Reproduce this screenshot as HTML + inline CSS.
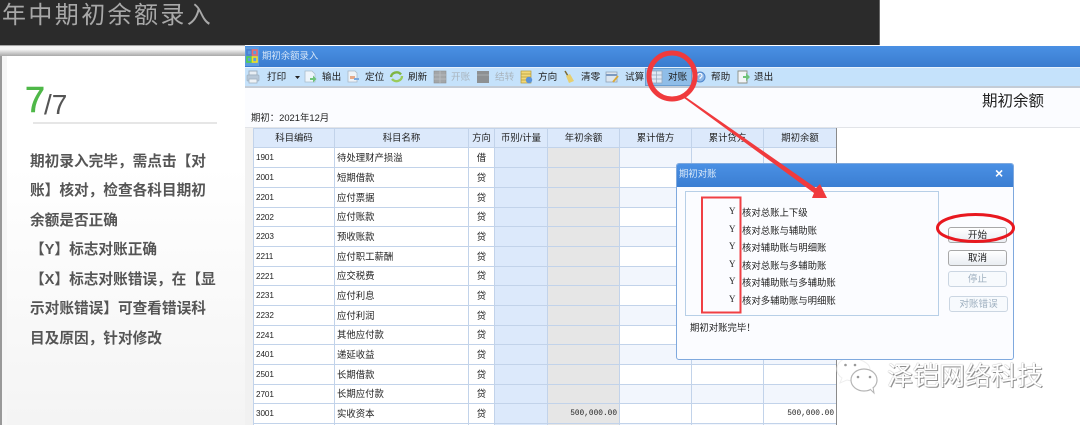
<!DOCTYPE html>
<html lang="zh">
<head>
<meta charset="utf-8">
<title>年中期初余额录入</title>
<style>
html,body{margin:0;padding:0;background:#fff}
#p{position:relative;width:1080px;height:425px;overflow:hidden;background:#fff;font-family:"Liberation Sans","Noto Sans CJK SC",sans-serif}
.t{position:absolute;white-space:nowrap;line-height:1}
.a{position:absolute}
.s{font-size:9.4px;color:#222}
.g{color:#a9b4bd}
.b{position:absolute;box-sizing:border-box;background:linear-gradient(#fff,#e9edf2);border:1px solid #a8a8a8;border-radius:3px;font-size:9.6px;color:#222;text-align:center}
.d{border-color:#cbd6e2;color:#9fb0c0;background:#f7fafd}
.l{position:absolute;left:30px;font-size:14.67px;font-weight:700;color:#555;line-height:1;white-space:nowrap}
table{position:absolute;left:253px;top:128px;border-collapse:collapse;table-layout:fixed;width:584px;font-size:9.4px;color:#222}
td,th{border:1px solid #c2d3ea;padding:0;overflow:hidden;white-space:nowrap;line-height:1;background:#fff}
th{background:#dce9fb;font-weight:400;text-align:center}
td.c{font-size:8.2px;letter-spacing:-.1px;padding:2px 0 0 2px;box-sizing:border-box}
td.n{padding-left:2px}
td.m{text-align:center}
td.u{background:#dce9fb}
td.e{background:#e6e6e6}
td.x{background:#f2f6fd}
td.v{font-family:"Liberation Mono",monospace;font-size:7.8px;text-align:right;padding:2px 2px 0 0;box-sizing:border-box}
</style>
</head>
<body>
<div id="p">
<!-- top band -->
<div class="a" style="left:0;top:0;width:880px;height:45px;background:#2b2b2b;border-right:1px solid #666;box-sizing:border-box"></div>
<div class="t" style="left:2px;top:4px;font-size:24px;letter-spacing:2.4px;color:#a8a8a8">年中期初余额录入</div>

<!-- left panel -->
<div class="a" style="left:0;top:45px;width:245px;height:11px;background:linear-gradient(#777 0,#f4f4f4 12%,#f4f4f4 40%,#a8a8a8 100%)"></div>
<div class="a" style="left:0;top:56px;width:245px;height:369px;background:linear-gradient(#fff,#fff 30%,#f4f4f4);"></div>
<div class="a" style="left:0;top:56px;width:2px;height:369px;background:#999"></div>
<div class="a" style="left:2px;top:56px;width:5px;height:369px;background:#f6f6f6"></div>
<div class="t" style="left:25px;top:82px;font-size:36px;color:#4fb848;-webkit-text-stroke:.6px #4fb848">7</div>
<div class="t" style="left:44px;top:91px;font-size:28px;color:#555">/7</div>
<div class="a" style="left:33px;top:122px;width:184px;height:2px;background:#e6e6e6"></div>
<div class="l" style="top:155px">期初录入完毕，需点击【对</div>
<div class="l" style="top:184px">账】核对，检查各科目期初</div>
<div class="l" style="top:214px">余额是否正确</div>
<div class="l" style="top:243px">【Y】标志对账正确</div>
<div class="l" style="top:273px">【X】标志对账错误，在【显</div>
<div class="l" style="top:302px">示对账错误】可查看错误科</div>
<div class="l" style="top:332px">目及原因，针对修改</div>

<!-- app window -->
<div class="a" style="left:245px;top:46px;width:835px;height:21px;background:linear-gradient(#4a90e4,#3a7ccf)"></div>
<div class="a" style="left:245px;top:67px;width:835px;height:1px;background:#e8f2fc"></div>
<div class="a" style="left:245px;top:68px;width:835px;height:18px;background:#c5e2fb"></div>
<div class="a" style="left:245px;top:86px;width:835px;height:2px;background:#c4ccd6"></div>
<div class="a" style="left:245px;top:88px;width:835px;height:39px;background:#fbfcff"></div>
<div class="a" style="left:245px;top:127px;width:835px;height:1px;background:#e2e4e8"></div>
<div class="a" style="left:245px;top:128px;width:8px;height:297px;background:#f1f1f1"></div>

<svg class="a" style="left:245px;top:47px" width="14" height="19" viewBox="0 0 14 19">
<rect x="0" y="0" width="14" height="19" fill="#5b9be0"/>
<rect x="2" y="3" width="4.500" height="5" fill="none" stroke="#4a7fd0" stroke-width="1.600"/>
<rect x="7.500" y="3" width="4.500" height="5" fill="none" stroke="#ef6a6a" stroke-width="1.600"/>
<rect x="2" y="10" width="4.500" height="5" fill="none" stroke="#52d24a" stroke-width="1.600"/>
<rect x="7.500" y="10" width="4.500" height="5" fill="none" stroke="#f2e01e" stroke-width="1.600"/>
</svg>
<div class="t" style="left:262px;top:51px;font-size:9.4px;color:#d5e5f7">期初余额录入</div>

<!-- toolbar -->
<div class="a" style="left:645px;top:68px;width:47px;height:18px;background:#8fbde8;border:1px solid #6a9fd2;box-sizing:border-box"></div>
<svg class="a" style="left:245px;top:68px" width="530" height="18" viewBox="245 68 530 18">
<!-- print -->
<rect x="249" y="71" width="8" height="4" fill="#e8eef4" stroke="#9fb0c0"/>
<rect x="247" y="75" width="12" height="6" rx="1" fill="#b8c8d8" stroke="#9fb0c0" stroke-width=".7"/>
<rect x="249" y="79" width="8" height="4" fill="#eef2f6" stroke="#9fb0c0" stroke-width=".8"/>
<!-- export -->
<path d="M305 71h7l3 3v8h-10z" fill="#eef5fb" stroke="#a8bccc" stroke-width=".8"/>
<path d="M310 78h3v-2.500l3.500 3.500-3.500 3.500v-2.500h-3z" fill="#6fc47a"/>
<!-- locate -->
<path d="M348 71h7l2 2v9h-9z" fill="#eef3f8" stroke="#a9b8c6" stroke-width=".8"/>
<rect x="350" y="76" width="5" height="3" fill="#e5a98a"/>
<rect x="354" y="78" width="5" height="2" fill="#7ba8de"/>
<!-- refresh -->
<path d="M391 77a5.500 5 0 0 1 10-2.500" fill="none" stroke="#7fb544" stroke-width="2.400"/>
<path d="M402 76a5.500 5 0 0 1-10 3" fill="none" stroke="#9acb5b" stroke-width="2.400"/>
<!-- open -->
<rect x="434" y="71" width="12" height="12" fill="#a3a6a8" stroke="#8e9092" stroke-width=".6"/>
<path d="M440 71v12M434 75h12M434 79h12" stroke="#bcbfc1" stroke-width=".8"/>
<!-- carry -->
<rect x="477" y="71" width="12" height="12" fill="#8d9092"/>
<path d="M477 75h12" stroke="#a8abad"/>
<!-- direction -->
<rect x="521" y="71" width="10" height="12" fill="#f2d878" stroke="#b49a3a" stroke-width=".7"/>
<path d="M521 74h10M521 77h10M521 80h10" stroke="#b49a3a" stroke-width=".7"/>
<circle cx="529" cy="80" r="3.200" fill="#5b93d8"/>
<!-- clear -->
<path d="M565 71l3 5" stroke="#7b6a35" stroke-width="1.500"/>
<path d="M566 76l4-2 4 7-5 2z" fill="#e7cf6f"/>
<!-- trial -->
<rect x="606" y="72" width="11" height="10" fill="#dde6ef" stroke="#8fa3b8" stroke-width=".8"/>
<path d="M606 75h11" stroke="#7d9ac0" stroke-width="2"/>
<path d="M613 82l5-6" stroke="#d9a93a" stroke-width="1.800"/>
<!-- check -->
<rect x="651" y="71" width="11" height="12" fill="#dfe9f5" stroke="#93a7bd" stroke-width=".8"/>
<path d="M656.500 71v12M651 75h11M651 79h11" stroke="#93a7bd" stroke-width=".7"/>
<!-- help -->
<circle cx="700" cy="77" r="5" fill="#8fb7e6" stroke="#4e86cc"/>
<path d="M698 75.500a2 2 0 1 1 3 1.700l-1 .8v1" fill="none" stroke="#fff" stroke-width="1"/>
<!-- exit -->
<path d="M738 71h9v12h-9z" fill="#f2f5f8" stroke="#8a8f84" stroke-width=".9"/>
<path d="M743 76h3v-3l4 4-4 4v-3h-3z" fill="#6fc47a"/>
<path d="M295 76h5l-2.500 3z" fill="#222"/>
</svg>
<div class="t s" style="left:267px;top:73px;font-size:9.6px">打印</div>
<div class="t s" style="left:322px;top:73px;font-size:9.6px">输出</div>
<div class="t s" style="left:365px;top:73px;font-size:9.6px">定位</div>
<div class="t s" style="left:408px;top:73px;font-size:9.6px">刷新</div>
<div class="t s g" style="left:451px;top:73px;font-size:9.6px">开账</div>
<div class="t s g" style="left:495px;top:73px;font-size:9.6px">结转</div>
<div class="t s" style="left:538px;top:73px;font-size:9.6px">方向</div>
<div class="t s" style="left:581px;top:73px;font-size:9.6px">清零</div>
<div class="t s" style="left:625px;top:73px;font-size:9.6px">试算</div>
<div class="t s" style="left:668px;top:73px;font-size:9.6px">对账</div>
<div class="t s" style="left:711px;top:73px;font-size:9.6px">帮助</div>
<div class="t s" style="left:754px;top:73px;font-size:9.6px">退出</div>

<div class="t s" style="left:251px;top:113px;font-size:9.4px">期初：2021年12月</div>
<div class="t" style="left:982px;top:94px;font-size:15.5px;color:#222">期初余额</div>

<!-- grid -->
<table>
<colgroup><col style="width:81px"><col style="width:134px"><col style="width:26px"><col style="width:53px"><col style="width:72px"><col style="width:72px"><col style="width:72px"><col style="width:73px"></colgroup>
<tr style="height:19px"><th>科目编码</th><th>科目名称</th><th>方向</th><th>币别/计量</th><th>年初余额</th><th>累计借方</th><th>累计贷方</th><th>期初余额</th></tr>
<tr style="height:20px"><td class="c">1901</td><td class="n">待处理财产损溢</td><td class="m">借</td><td class="u"></td><td class="e"></td><td class="x"></td><td class="x"></td><td class="x"></td></tr>
<tr style="height:20px"><td class="c">2001</td><td class="n">短期借款</td><td class="m">贷</td><td class="u"></td><td class="e"></td><td></td><td></td><td></td></tr>
<tr style="height:20px"><td class="c">2201</td><td class="n">应付票据</td><td class="m">贷</td><td class="u"></td><td class="e"></td><td class="x"></td><td class="x"></td><td class="x"></td></tr>
<tr style="height:19px"><td class="c">2202</td><td class="n">应付账款</td><td class="m">贷</td><td class="u"></td><td class="e"></td><td></td><td></td><td></td></tr>
<tr style="height:20px"><td class="c">2203</td><td class="n">预收账款</td><td class="m">贷</td><td class="u"></td><td class="e"></td><td class="x"></td><td class="x"></td><td class="x"></td></tr>
<tr style="height:20px"><td class="c">2211</td><td class="n">应付职工薪酬</td><td class="m">贷</td><td class="u"></td><td class="e"></td><td></td><td></td><td></td></tr>
<tr style="height:19px"><td class="c">2221</td><td class="n">应交税费</td><td class="m">贷</td><td class="u"></td><td class="e"></td><td class="x"></td><td class="x"></td><td class="x"></td></tr>
<tr style="height:20px"><td class="c">2231</td><td class="n">应付利息</td><td class="m">贷</td><td class="u"></td><td class="e"></td><td></td><td></td><td></td></tr>
<tr style="height:20px"><td class="c">2232</td><td class="n">应付利润</td><td class="m">贷</td><td class="u"></td><td class="e"></td><td class="x"></td><td class="x"></td><td class="x"></td></tr>
<tr style="height:19px"><td class="c">2241</td><td class="n">其他应付款</td><td class="m">贷</td><td class="u"></td><td class="e"></td><td></td><td></td><td></td></tr>
<tr style="height:20px"><td class="c">2401</td><td class="n">递延收益</td><td class="m">贷</td><td class="u"></td><td class="e"></td><td class="x"></td><td class="x"></td><td class="x"></td></tr>
<tr style="height:20px"><td class="c">2501</td><td class="n">长期借款</td><td class="m">贷</td><td class="u"></td><td class="e"></td><td></td><td></td><td></td></tr>
<tr style="height:19px"><td class="c">2701</td><td class="n">长期应付款</td><td class="m">贷</td><td class="u"></td><td class="e"></td><td class="x"></td><td class="x"></td><td class="x"></td></tr>
<tr style="height:20px"><td class="c">3001</td><td class="n">实收资本</td><td class="m">贷</td><td class="u"></td><td class="e v">500,000.00</td><td></td><td></td><td class="v">500,000.00</td></tr>
<tr style="height:20px"><td></td><td></td><td></td><td class="u"></td><td class="e"></td><td class="x"></td><td class="x"></td><td class="x"></td></tr>
</table>
<div class="a" style="left:836px;top:128px;width:1px;height:297px;background:#8a8a8a"></div>

<!-- watermark -->
<svg class="a" style="left:836px;top:355px" width="50" height="42" viewBox="0 0 50 42">
<path d="M14 3C6 3 1 8 1 14c0 4 2 7 5 9l-2 5 7-3c3 1 6 1 9 0 8-1 14-6 14-11C34 8 23 3 14 3z" fill="#fff" stroke="#eee" stroke-width="1"/>
<ellipse cx="28" cy="25" rx="13" ry="11" fill="#fff" stroke="#b5b5b5" stroke-width="1.200"/>
<path d="M34 34l4 4-1-6" fill="#fff" stroke="#b5b5b5" stroke-width="1"/>
<circle cx="9.500" cy="10" r="1.300" fill="#999"/><circle cx="19" cy="10" r="1.300" fill="#999"/>
<circle cx="22" cy="22" r="1.300" fill="#999"/><circle cx="34" cy="22" r="1.300" fill="#999"/>
</svg>
<div class="t" style="left:887px;top:363px;font-size:26px;color:#fff;text-shadow:1px 1px 0 #8f8f8f,0 0 1px #777">泽铠网络科技</div>

<!-- dialog -->
<div class="a" style="left:676px;top:163px;width:338px;height:197px;box-sizing:border-box;background:#fbfcff;border:1px solid #7fa9de;border-radius:3px;overflow:hidden">
<div style="height:23px;background:linear-gradient(#4a90e4,#3b7ed2)"></div>
</div>
<div class="t" style="left:679px;top:169px;font-size:9.4px;color:#d8e8f8">期初对账</div>
<div class="t" style="left:995px;top:166px;font-size:14px;font-weight:700;color:#fff">×</div>
<div class="a" style="left:685px;top:191px;width:254px;height:125px;box-sizing:border-box;border:1px solid #b7cfe7"></div>
<div class="t s" style="left:729px;top:207px;font-family:'Liberation Serif',serif;font-size:9px">Y</div>
<div class="t s" style="left:742px;top:208px">核对总账上下级</div>
<div class="t s" style="left:729px;top:225px;font-family:'Liberation Serif',serif;font-size:9px">Y</div>
<div class="t s" style="left:742px;top:226px">核对总账与辅助账</div>
<div class="t s" style="left:729px;top:242px;font-family:'Liberation Serif',serif;font-size:9px">Y</div>
<div class="t s" style="left:742px;top:243px">核对辅助账与明细账</div>
<div class="t s" style="left:729px;top:260px;font-family:'Liberation Serif',serif;font-size:9px">Y</div>
<div class="t s" style="left:742px;top:261px">核对总账与多辅助账</div>
<div class="t s" style="left:729px;top:277px;font-family:'Liberation Serif',serif;font-size:9px">Y</div>
<div class="t s" style="left:742px;top:278px">核对辅助账与多辅助账</div>
<div class="t s" style="left:729px;top:295px;font-family:'Liberation Serif',serif;font-size:9px">Y</div>
<div class="t s" style="left:742px;top:296px">核对多辅助账与明细账</div>
<div class="t s" style="left:690px;top:323px">期初对账完毕！</div>
<div class="b" style="left:948px;top:227px;width:59px;height:16px;line-height:16px">开始</div>
<div class="b" style="left:948px;top:250px;width:59px;height:16px;line-height:16px">取消</div>
<div class="b d" style="left:948px;top:271px;width:59px;height:16px;line-height:16px">停止</div>
<div class="b d" style="left:949px;top:296px;width:59px;height:16px;line-height:16px">对账错误</div>

<!-- annotations -->
<svg class="a" style="left:0;top:0" width="1080" height="425" viewBox="0 0 1080 425">
<ellipse cx="672" cy="76" rx="23" ry="23" fill="none" stroke="#f03a3d" stroke-width="5"/>
<polygon points="685,96.500 816,188 820,184 827,198 812,198 814,193 684,98" fill="#f03a3d"/>
<ellipse cx="975.500" cy="228" rx="38" ry="13.500" fill="none" stroke="#e8181f" stroke-width="3"/>
<rect x="702" y="197.500" width="38.500" height="115" fill="none" stroke="#f04044" stroke-width="2"/>
</svg>
</div>
</body>
</html>
